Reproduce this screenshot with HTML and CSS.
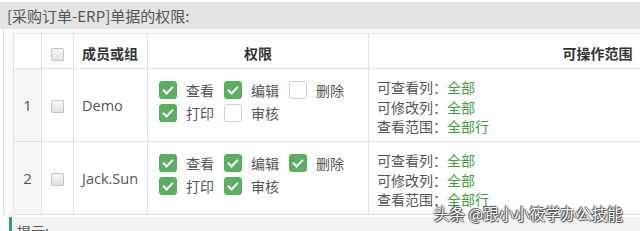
FILE: index.html
```html
<!DOCTYPE html>
<html lang="zh">
<head>
<meta charset="utf-8">
<link rel="stylesheet" href="styles.css">
</head>
<body>
<div class="page">
  <div class="title-bar">[采购订单-ERP]单据的权限:</div>
  <div class="panel">
    <table class="perm-table">
      <colgroup>
        <col class="c-no"><col class="c-chk"><col class="c-name"><col class="c-perm"><col class="c-range">
      </colgroup>
      <thead>
        <tr class="head-row">
          <th></th>
          <th><span class="mini-box"></span></th>
          <th class="left">成员或组</th>
          <th>权限</th>
          <th>可操作范围</th>
        </tr>
      </thead>
      <tbody>
        <tr class="body-row">
          <td class="no">1</td>
          <td class="center"><span class="mini-box"></span></td>
          <td class="name">Demo</td>
          <td class="perm">
            <div class="perm-row">
              <span class="item"><span class="box on"></span>查看</span>
              <span class="item"><span class="box on"></span>编辑</span>
              <span class="item"><span class="box"></span>删除</span>
            </div>
            <div class="perm-row">
              <span class="item"><span class="box on"></span>打印</span>
              <span class="item"><span class="box"></span>审核</span>
            </div>
          </td>
          <td class="range">
            <div>可查看列：<span class="val">全部</span></div>
            <div>可修改列：<span class="val">全部</span></div>
            <div>查看范围：<span class="val">全部行</span></div>
          </td>
        </tr>
        <tr class="body-row">
          <td class="no">2</td>
          <td class="center"><span class="mini-box"></span></td>
          <td class="name">Jack.Sun</td>
          <td class="perm">
            <div class="perm-row">
              <span class="item"><span class="box on"></span>查看</span>
              <span class="item"><span class="box on"></span>编辑</span>
              <span class="item"><span class="box on"></span>删除</span>
            </div>
            <div class="perm-row">
              <span class="item"><span class="box on"></span>打印</span>
              <span class="item"><span class="box on"></span>审核</span>
            </div>
          </td>
          <td class="range">
            <div>可查看列：<span class="val">全部</span></div>
            <div>可修改列：<span class="val">全部</span></div>
            <div>查看范围：<span class="val">全部行</span></div>
          </td>
        </tr>
      </tbody>
    </table>
  </div>
  <div class="tip"><span class="tip-text">提示:</span></div>
  <div class="watermark">头条 @跟小小筱学办公技能</div>
</div>
</body>
</html>
```
FILE: styles.css
```css
html, body {
  margin: 0;
  padding: 0;
  background: #ffffff;
  overflow: hidden;
}
body {
  width: 640px;
  height: 231px;
  font-family: "Open Sans", "Noto Sans CJK SC", sans-serif;
  color: #555;
}
.page {
  position: relative;
  width: 640px;
  height: 231px;
  overflow: hidden;
}
.title-bar {
  margin-top: 2px;
  height: 27px;
  line-height: 28px;
  background: #e4e4e4;
  padding-left: 7px;
  font-family: "Noto Sans CJK SC", sans-serif;
  font-size: 15px;
  color: #555;
  white-space: nowrap;
}
.panel {
  margin-left: 3px;
  border-left: 1px solid #dcdcdc;
  padding-left: 9px;
  padding-top: 4px;
  background: #fbfbfb;
}
.perm-table {
  border-collapse: collapse;
  table-layout: fixed;
  width: 813px;
  background: #fff;
  font-size: 14px;
}
.c-no { width: 28px; }
.c-chk { width: 32px; }
.c-name { width: 74px; }
.c-perm { width: 221px; }
.c-range { width: 458px; }
.perm-table th, .perm-table td {
  border: 1px solid #e2e2e2;
  padding: 0;
  overflow: hidden;
}
.head-row {
  height: 35px;
}
.perm-table th {
  padding-top: 3px;
  font-family: "Noto Sans CJK SC", sans-serif;
  font-weight: bold;
  line-height: 20px;
  color: #333;
  text-align: center;
  vertical-align: middle;
}
.perm-table th.left {
  text-align: left;
  padding-left: 8px;
}
.mini-box {
  display: inline-block;
  width: 11px;
  height: 11px;
  border: 1px solid #c2c2c2;
  border-radius: 2px;
  background: linear-gradient(#f8f8f8, #e2e2e2);
  vertical-align: middle;
}
.body-row {
  height: 73px;
}
.perm-table td {
  vertical-align: middle;
  line-height: 19px;
}
.no {
  background: #f6f6f6;
  text-align: center;
  color: #555;
  font-size: 15px;
}
.center {
  text-align: center;
}
.perm-table td.name {
  padding-left: 8px;
  color: #555;
  font-size: 14.5px;
}
.perm-table td.perm {
  vertical-align: top;
  padding: 12px 0 0 11px;
}
.perm-row {
  display: flex;
  gap: 10px;
  height: 18px;
  margin-bottom: 5px;
  font-family: "Noto Sans CJK SC", sans-serif;
  font-size: 14px;
  line-height: 18px;
  color: #555;
}
.item {
  display: flex;
  align-items: center;
  gap: 9px;
}
.box {
  display: inline-block;
  box-sizing: border-box;
  width: 18px;
  height: 18px;
  border: 1px solid #cfcfcf;
  border-radius: 3px;
  background: #fff;
  position: relative;
}
.box.on {
  border-color: #58ad5e;
  background: #5bb060;
}
.box.on::after {
  content: "";
  position: absolute;
  left: 5px;
  top: 2px;
  width: 4px;
  height: 8px;
  border: solid #fff;
  border-width: 0 2px 2px 0;
  transform: rotate(45deg);
}
.perm-table td.range {
  padding: 9px 0 0 8px;
  font-family: "Noto Sans CJK SC", sans-serif;
  font-size: 14px;
  line-height: 19.5px;
  color: #555;
  vertical-align: top;
}
.val {
  color: #3f9d3f;
}
.tip {
  margin-top: 2px;
  margin-left: 9px;
  height: 20px;
  border-left: 3px solid #3d9a72;
  background: #f3f3f3;
  padding-left: 5px;
}
.tip-text {
  display: block;
  padding-top: 5px;
  font-family: "Noto Sans CJK SC", sans-serif;
  font-size: 14px;
  line-height: 18px;
  color: #555;
}
.watermark {
  position: absolute;
  left: 434px;
  top: 203px;
  font-family: "Noto Sans CJK SC", sans-serif;
  font-size: 15.5px;
  line-height: 20px;
  color: #fff;
  white-space: nowrap;
  text-shadow: 0 0 1px #333, 0 0 1px #333, 1px 1px 1px #555, -1px -1px 1px #555;
}
```
